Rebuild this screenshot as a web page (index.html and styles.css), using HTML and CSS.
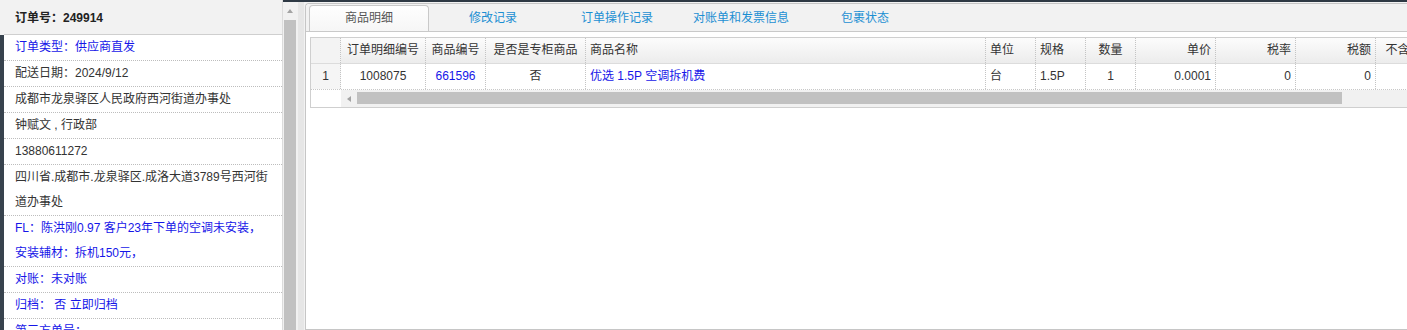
FILE: index.html
```html
<!DOCTYPE html>
<html lang="zh-CN">
<head>
    <meta charset="UTF-8">
    <title>订单详情</title>
    <link rel="stylesheet" href="styles.css">
</head>
<body>
<div class="page">
    <div class="side">
        <div class="side-head">订单号：249914</div>
        <ul class="info">
            <li class="blue">订单类型：供应商直发</li>
            <li>配送日期：2024/9/12</li>
            <li>成都市龙泉驿区人民政府西河街道办事处</li>
            <li>钟赋文 , 行政部</li>
            <li>13880611272</li>
            <li>四川省.成都市.龙泉驿区.成洛大道3789号西河街<br>道办事处</li>
            <li class="blue">FL：陈洪刚0.97 客户23年下单的空调未安装，<br>安装辅材：拆机150元，</li>
            <li class="blue">对账：未对账</li>
            <li class="blue">归档： 否 立即归档</li>
            <li class="blue">第三方单号：</li>
        </ul>
    </div>

    <div class="pane">
        <div class="vscroll">
            <div class="vs-btn"><span class="arrow-up"></span></div>
            <div class="vs-thumb"></div>
        </div>
        <div class="splitter"></div>

        <div class="main">
            <div class="tabs">
                <div class="tab active">商品明细</div>
                <div class="tab">修改记录</div>
                <div class="tab">订单操作记录</div>
                <div class="tab">对账单和发票信息</div>
                <div class="tab">包裹状态</div>
            </div>

            <div class="grid">
                <div class="row head">
                    <div class="cell c-num"></div>
                    <div class="cell c-id center">订单明细编号</div>
                    <div class="cell c-code center">商品编号</div>
                    <div class="cell c-flag center">是否是专柜商品</div>
                    <div class="cell c-name">商品名称</div>
                    <div class="cell c-s">单位</div>
                    <div class="cell c-s">规格</div>
                    <div class="cell c-s center">数量</div>
                    <div class="cell c-m num">单价</div>
                    <div class="cell c-m num">税率</div>
                    <div class="cell c-m num">税额</div>
                    <div class="cell c-m center">不含税单价</div>
                    <div class="cell c-m center">不含税金额</div>
                </div>
                <div class="row">
                    <div class="cell c-num center">1</div>
                    <div class="cell c-id center">1008075</div>
                    <div class="cell c-code center blue">661596</div>
                    <div class="cell c-flag center">否</div>
                    <div class="cell c-name blue">优选 1.5P 空调拆机费</div>
                    <div class="cell c-s">台</div>
                    <div class="cell c-s">1.5P</div>
                    <div class="cell c-s center">1</div>
                    <div class="cell c-m num">0.0001</div>
                    <div class="cell c-m num">0</div>
                    <div class="cell c-m num">0</div>
                    <div class="cell c-m"></div>
                    <div class="cell c-m"></div>
                </div>
                <div class="hscroll">
                    <div class="hs-pad"></div>
                    <div class="hs-track">
                        <div class="hs-btn"><span class="arrow-left"></span></div>
                        <div class="hs-thumb"></div>
                    </div>
                </div>
            </div>
        </div>
    </div>
</div>
</body>
</html>
```

FILE: styles.css
```css
html, body {
    margin: 0;
    padding: 0;
    overflow: hidden;
}
body {
    font-family: "Liberation Sans", "Noto Sans CJK SC", sans-serif;
    font-size: 12px;
    color: #333;
    background: #f2f2f2;
}
.page {
    display: flex;
    width: 1500px;
    height: 330px;
}
.blue {
    color: #1616e8;
}

/* left info panel */
.side {
    width: 283px;
    flex-shrink: 0;
}
.side-head {
    margin-left: 4px;
    height: 34px;
    line-height: 36px;
    padding-left: 11px;
    font-weight: bold;
    color: #222;
    background: #f2f2f2;
    border-right: 1px solid #dcdcdc;
    border-bottom: 1px solid #cfcfcf;
}
.info {
    list-style: none;
    margin: 0;
    padding: 0;
    height: 295px;
    background: #fff;
    border-left: 4px solid #37424d;
    border-right: 1px solid #dcdcdc;
}
.info li {
    line-height: 25px;
    padding-left: 11px;
    border-bottom: 1px dotted #bdbdbd;
    white-space: nowrap;
}

.pane {
    flex: 1;
    display: flex;
    border-top: 2px solid #2e3944;
}
.vscroll {
    width: 15px;
    flex-shrink: 0;
    background: #f1f1f1;
}
.vs-btn {
    height: 18px;
    display: flex;
    align-items: center;
    justify-content: center;
}
.arrow-up {
    width: 0;
    height: 0;
    border-left: 3.5px solid transparent;
    border-right: 3.5px solid transparent;
    border-bottom: 4px solid #a3a3a3;
    margin-left: -1px;
}
.vs-thumb {
    margin: 0 2px 0 1px;
    height: 320px;
    background: #c1c1c1;
}
.splitter {
    width: 6px;
    flex-shrink: 0;
    background: #e6e6e6;
}

/* main panel */
.main {
    flex: 1;
    margin: 1px 0 0 1px;
    background: #fff;
    border: 1px solid #c6c6c6;
    border-right: none;
    border-radius: 4px 0 0 0;
}
.tabs {
    display: flex;
    padding: 1px 0 0 3px;
    background: #f2f2f2;
    border-bottom: 1px solid #c9c9c9;
    border-radius: 4px 0 0 0;
}
.tab {
    box-sizing: border-box;
    width: 120px;
    height: 26px;
    line-height: 25px;
    margin-right: 4px;
    text-align: center;
    color: #1c8fd2;
    border: 1px solid transparent;
    border-bottom: none;
}
.tab.active {
    color: #555;
    background: linear-gradient(#fefefe, #f6f6f6);
    border-color: #c9c9c9;
    border-radius: 4px 4px 0 0;
}

.grid {
    margin: 5px 0 0 4px;
    border: 1px solid #cfcfcf;
    overflow: hidden;
}
.row {
    display: flex;
    height: 25px;
    line-height: 24px;
    border-bottom: 1px dotted #c8c8c8;
    white-space: nowrap;
}
.row.head {
    background: linear-gradient(#fcfcfc, #ececec);
    border-bottom: 1px solid #dcdcdc;
}
.cell {
    box-sizing: border-box;
    flex-shrink: 0;
    padding: 0 4px;
    border-right: 1px dotted #c4c4c4;
    overflow: hidden;
}
.center {
    text-align: center;
}
.num {
    text-align: right;
}
.c-num {
    width: 30px;
    background: #f5f5f5;
    padding: 0;
}
.row.head .c-num {
    background: #f3f3f3;
}
.c-id { width: 85px; }
.c-code { width: 60px; }
.c-flag { width: 100px; }
.c-name { width: 400px; }
.c-s { width: 50px; }
.c-m { width: 80px; }

.hscroll {
    display: flex;
    height: 17px;
}
.hs-pad {
    width: 30px;
    background: #fff;
}
.hs-track {
    flex: 1;
    display: flex;
    background: #f1f1f1;
}
.hs-btn {
    width: 16px;
    display: flex;
    align-items: center;
    justify-content: center;
}
.arrow-left {
    width: 0;
    height: 0;
    border-top: 3.5px solid transparent;
    border-bottom: 3.5px solid transparent;
    border-right: 4px solid #a3a3a3;
}
.hs-thumb {
    width: 985px;
    height: 12px;
    margin-top: 2px;
    background: #c1c1c1;
}
```
